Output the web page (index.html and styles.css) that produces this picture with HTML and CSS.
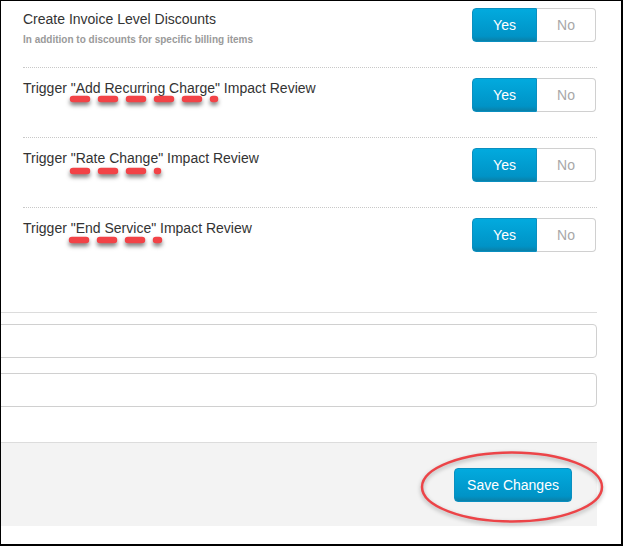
FILE: index.html
```html
<!DOCTYPE html>
<html>
<head>
<meta charset="utf-8">
<link rel="stylesheet" href="styles.css">
</head>
<body>
<div class="frame">
  <div class="settings">
    <div class="row row-first">
      <div class="label">
        <div class="title">Create Invoice Level Discounts</div>
        <div class="help">In addition to discounts for specific billing items</div>
      </div>
      <div class="toggle"><span class="yes">Yes</span><span class="no">No</span></div>
    </div>
    <div class="row">
      <div class="label"><div class="title">Trigger "Add Recurring Charge" Impact Review</div></div>
      <div class="toggle"><span class="yes">Yes</span><span class="no">No</span></div>
    </div>
    <div class="row">
      <div class="label"><div class="title">Trigger "Rate Change" Impact Review</div></div>
      <div class="toggle"><span class="yes">Yes</span><span class="no">No</span></div>
    </div>
    <div class="row row-last">
      <div class="label"><div class="title">Trigger "End Service" Impact Review</div></div>
      <div class="toggle"><span class="yes">Yes</span><span class="no">No</span></div>
    </div>
  </div>
  <div class="fields">
    <input class="field" type="text">
    <input class="field" type="text">
  </div>
  <div class="footer">
    <button class="save">Save Changes</button>
  </div>
  <svg class="marks" width="623" height="546" viewBox="0 0 623 546">
    <g class="dashes">
      <line x1="73" y1="99" x2="215" y2="99"/>
      <line x1="73" y1="171" x2="158" y2="171"/>
      <line x1="72" y1="240" x2="159" y2="240"/>
    </g>
    <ellipse class="ring" cx="512" cy="487" rx="90" ry="34.5"/>
  </svg>
</div>
</body>
</html>
```

FILE: styles.css
```css
html, body {
  margin: 0;
  padding: 0;
  background: #fff;
}

.frame {
  position: relative;
  box-sizing: border-box;
  width: 623px;
  height: 546px;
  border-top: 1px solid #000;
  border-left: 1px solid #000;
  border-right: 2px solid #000;
  border-bottom: 2px solid #000;
  overflow: hidden;
  font-family: "Liberation Sans", Arial, sans-serif;
  color: #333;
  padding-right: 24px;
}

.settings {
  margin-left: 22px;
}

.row {
  display: flex;
  justify-content: space-between;
  align-items: flex-start;
  height: 34px;
  padding: 10px 1px 25px 0;
  border-bottom: 1px dotted #c8c8c8;
}

.row-first {
  padding-top: 7px;
}

.row-last {
  border-bottom: none;
  padding-bottom: 60px;
}

.title {
  font-size: 14px;
  line-height: 20px;
}

.row-first .title {
  margin-top: 1px;
}

.help {
  margin-top: 5px;
  font-size: 10px;
  line-height: 12px;
  font-weight: bold;
  color: #9a9a9a;
}

.toggle {
  display: flex;
  height: 34px;
}

.yes, .no {
  box-sizing: border-box;
  height: 34px;
  display: flex;
  align-items: center;
  justify-content: center;
  font-size: 14px;
}

.yes {
  width: 65px;
  color: #fff;
  background: linear-gradient(#02aade, #0093c6 85%, #0a80a8);
  border: 1px solid #0a8fc0;
  border-radius: 4px 0 0 4px;
}

.no {
  width: 59px;
  color: #a8a8a8;
  background: #fff;
  border: 1px solid #d0d0d0;
  border-left: none;
  border-radius: 0 4px 4px 0;
}

.fields {
  border-top: 1px solid #dcdcdc;
  padding-top: 11px;
  padding-bottom: 20px;
  display: flex;
  flex-direction: column;
  gap: 15px;
}

.field {
  box-sizing: border-box;
  display: block;
  width: calc(100% + 20px);
  margin-left: -20px;
  height: 34px;
  border: 1px solid #d0d0d0;
  border-radius: 4px;
  background: #fff;
  padding: 0;
}

.footer {
  margin-top: 15px;
  border-top: 1px solid #dcdcdc;
  background: #f3f3f3;
  height: 84px;
  box-sizing: border-box;
  padding: 25px 25px 25px 0;
  display: flex;
  justify-content: flex-end;
}

.save {
  width: 118px;
  height: 34px;
  box-sizing: border-box;
  border: 1px solid #0a8fc0;
  border-radius: 4px;
  color: #fff;
  font-family: "Liberation Sans", Arial, sans-serif;
  font-size: 14px;
  background: linear-gradient(#02aade, #0093c6 85%, #0a80a8);
  padding: 0;
}

.marks {
  position: absolute;
  left: -1px;
  top: -1px;
  pointer-events: none;
}

.dashes line {
  stroke: #f24347;
  stroke-width: 6.5;
  stroke-linecap: round;
  stroke-dasharray: 14 14;
  filter: drop-shadow(0 3px 2px rgba(0, 0, 0, 0.5));
}

.ring {
  fill: none;
  stroke: #ec4448;
  stroke-width: 2.5;
  filter: drop-shadow(0 2px 2px rgba(0, 0, 0, 0.3));
}
```
